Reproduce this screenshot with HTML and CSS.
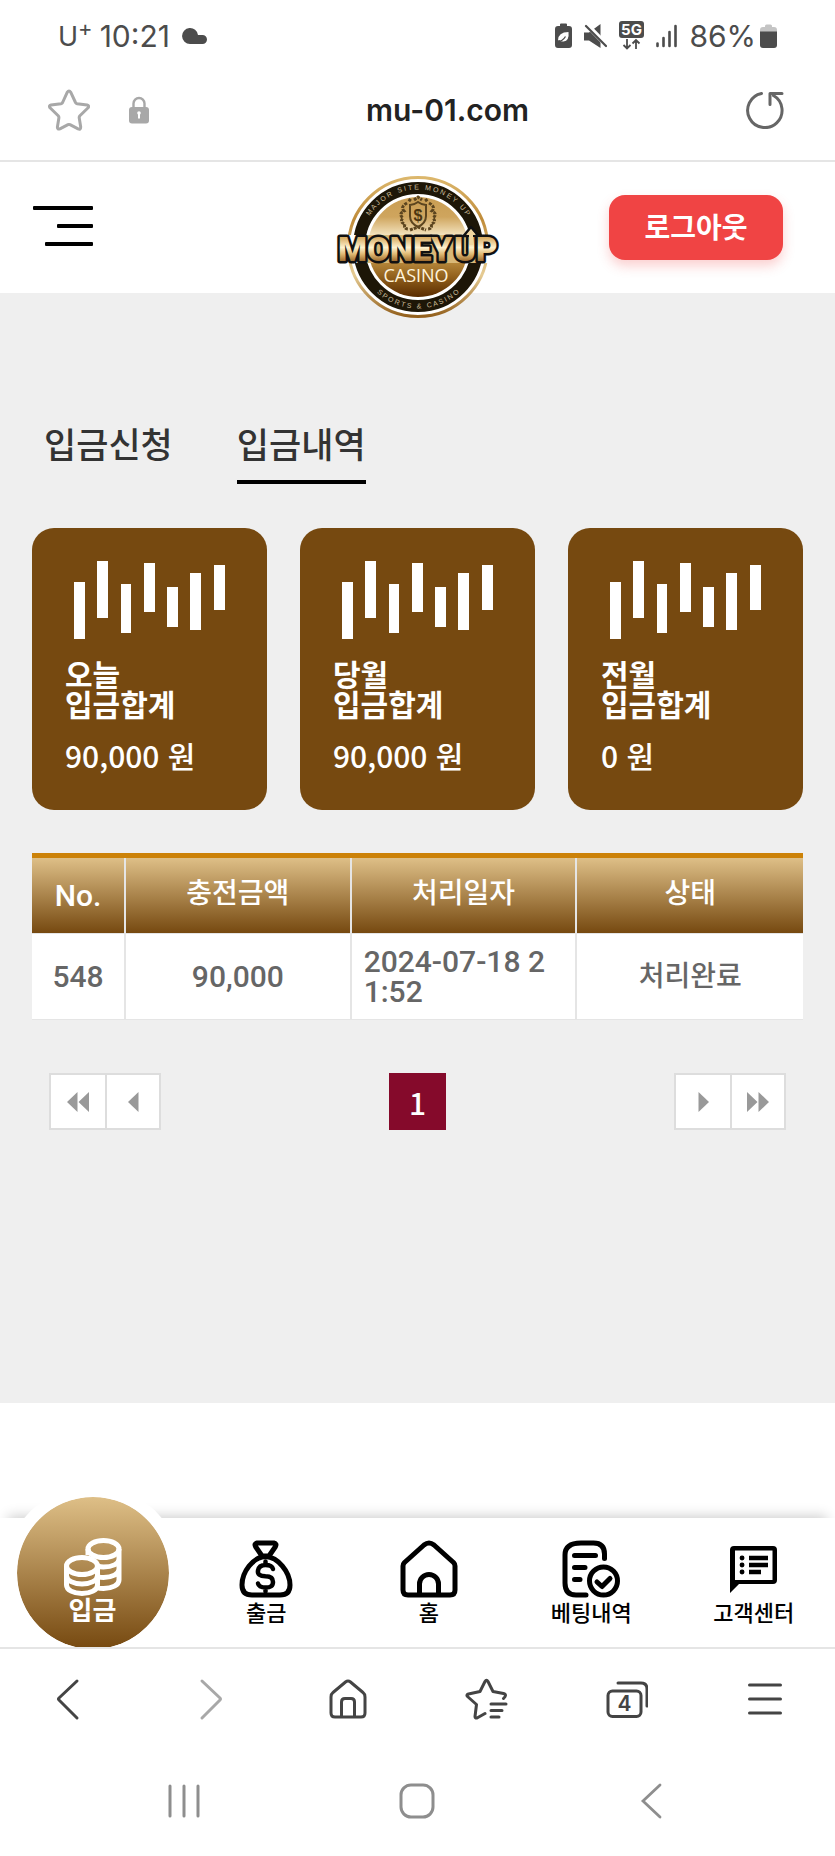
FILE: index.html
```html
<!DOCTYPE html>
<html lang="ko">
  <head>
    <meta charset="UTF-8" />
    <meta name="viewport" content="width=device-width, initial-scale=1.0" />
    <title>입금내역</title>
    <link rel="stylesheet" href="styles.css">
  </head>
  <body>
    <div class="status-bar">
      <span class="carrier">U<sup>+</sup></span>
      <span class="clock">10:21</span>
      <svg class="cloud" width="26" height="18" viewBox="0 0 26 18" fill="#4c4c4c">
        <path d="M8 17a8 8 0 1 1 8-9h4.500a4.500 4.500 0 0 1 0 9z" />
      </svg>
      <div class="status-icons">
        <svg width="17" height="26" viewBox="0 0 17 26">
          <path d="M5 3V1.500Q5 .5 6 .5h5q1 0 1 1V3h2q3 0 3 3v16q0 3-3 3H3q-3 0-3-3V6q0-3 3-3z" fill="#4c4c4c" />
          <path d="M3 17.500Q3 9 13.500 9q1 9-5 9.500-3 .3-4-1.500z" fill="#fff" />
          <path d="M2.500 18.500q5 0 8-5" stroke="#4c4c4c" stroke-width="1.300" fill="none" />
        </svg>
        <svg width="23" height="24" viewBox="0 0 23 24">
          <path d="M0 8.500h5L16.500 0v24L5 16.500H0z" fill="#4c4c4c" />
          <path d="M2 0l21 21.500" stroke="#fff" stroke-width="5" />
          <path d="M2 2l20 20" stroke="#4c4c4c" stroke-width="2.200" stroke-linecap="round" />
        </svg>
        <svg width="25" height="30" viewBox="0 0 25 30">
          <rect width="25" height="17" rx="3" fill="#4c4c4c" />
          <text x="12.500" y="14" text-anchor="middle" class="network">5G</text>
          <path d="M8 18v9M4.500 24L8 27.500l3.500-3.500M17 28v-9M13.500 22.500L17 19l3.500 3.500" stroke="#4c4c4c" stroke-width="1.800" fill="none" />
        </svg>
        <svg width="21" height="24" viewBox="0 0 21 24" stroke="#4c4c4c" stroke-width="2.600" stroke-linecap="round">
          <path d="M1.500 19.500v2.500M7.500 14v8M13.500 8v14M19.500 2v20" />
        </svg>
        <span class="battery-text">86%</span>
        <svg width="17" height="25" viewBox="0 0 17 25">
          <path d="M5 3V2q0-1.500 1.500-1.500h4Q12 .5 12 2v1h2q3 0 3 3v5H0V6q0-3 3-3z" fill="#c4c4c4" />
          <path d="M0 7.500h17V21q0 3-3 3H3q-3 0-3-3z" fill="#4c4c4c" />
        </svg>
      </div>
    </div>

    <div class="address-bar">
      <button class="icon-button" aria-label="즐겨찾기">
        <svg width="42" height="42" viewBox="0 0 42 42" fill="none" stroke="#a8a8a8" stroke-width="3" stroke-linejoin="round">
          <path d="M19.200 3.300q1.800-2.600 3.600 0l4.700 10.200q.5 1 1.600 1.200l10 1.300q2.600.7 1 2.800l-8.200 8q-.8.900-.7 2l1.500 9.200q0 2.900-2.600 1.900l-8.100-4.200q-1-.5-2 0l-8.100 4.200q-2.700.9-2.500-1.900l1.500-9.200q.1-1.100-.7-2l-8.200-8q-1.500-2.100 1-2.800l10-1.300q1.100-.2 1.600-1.200z" />
        </svg>
      </button>
      <svg class="lock" width="20" height="28" viewBox="0 0 20 28">
        <path d="M4.500 12V7.500a5.500 5.500 0 0 1 11 0V12" fill="none" stroke="#a8a8a8" stroke-width="2.400" />
        <rect y="11" width="20" height="16.500" rx="3" fill="#a8a8a8" />
        <path d="M10 16.500v6" stroke="#fff" stroke-width="2" />
        <circle cx="10" cy="17" r="1.800" fill="#fff" />
      </svg>
      <span class="address">mu-01.com</span>
      <button class="icon-button" aria-label="새로고침">
        <svg width="38" height="38" viewBox="0 0 38 38" fill="none" stroke="#666" stroke-width="3" stroke-linecap="round" stroke-linejoin="round">
          <path d="M15.500 2.500A17.200 17.200 0 1 0 27.500 4.500M24 13.500V2.500h12" />
        </svg>
      </button>
    </div>

    <header class="header">
      <button class="menu-button" aria-label="메뉴">
        <span class="line line-1"></span>
        <span class="line line-2"></span>
        <span class="line line-3"></span>
      </button>

      <a href="#" class="logo" aria-label="Money Up Casino">
        <svg width="168" height="144" viewBox="0 0 168 144">
          <defs>
            <linearGradient id="gold" x1="0" y1="0" x2="0" y2="1">
              <stop offset="0" stop-color="#c99d52" />
              <stop offset=".2" stop-color="#cfa55e" />
              <stop offset=".38" stop-color="#f3e3be" />
              <stop offset=".6" stop-color="#c39545" />
              <stop offset=".8" stop-color="#91601c" />
              <stop offset="1" stop-color="#5a2c00" />
            </linearGradient>
            <linearGradient id="ring" x1="0" y1="0" x2="0" y2="1">
              <stop offset="0" stop-color="#dcb76c" />
              <stop offset=".3" stop-color="#c08c3a" />
              <stop offset=".7" stop-color="#e6cc94" />
              <stop offset="1" stop-color="#93601d" />
            </linearGradient>
            <linearGradient id="letters" x1="0" y1="0" x2="0" y2="1">
              <stop offset=".2" stop-color="#d9ae66" />
              <stop offset=".45" stop-color="#fff2cf" />
              <stop offset=".62" stop-color="#dfb872" />
              <stop offset=".85" stop-color="#8a541a" />
            </linearGradient>
            <path id="arc-top" d="M26.500 72A57.500 57.500 0 0 1 141.500 72" />
            <path id="arc-bottom" d="M22.500 72A61.500 61.500 0 0 0 145.500 72" />
          </defs>
          <circle cx="84" cy="72" r="69.500" fill="#fff" stroke="url(#ring)" stroke-width="3" />
          <circle cx="84" cy="72" r="59" fill="none" stroke="#1d1607" stroke-width="12" />
          <circle cx="84" cy="72" r="50" fill="url(#gold)" />
          <text class="logo-arc"><textPath href="#arc-top" startOffset="50%" text-anchor="middle">M A J O R &#160; S I T E &#160; M O N E Y &#160; U P</textPath></text>
          <text class="logo-arc"><textPath href="#arc-bottom" startOffset="50%" text-anchor="middle">S P O R T S &#160; &amp; &#160; C A S I N O</textPath></text>
          <g fill="none" stroke="#5c451f" stroke-width="2">
            <path d="M76 30q4 0 8-3 4 3 8 3v11q0 7-8 11-8-4-8-11z" />
            <path d="M73 28q-7 4-3 8-6 3-1 7-4 4 2 6-2 5 4 5M95 28q7 4 3 8 6 3 1 7 4 4-2 6 2 5-4 5M77 26l-3-2M91 26l3-2M80 25l4-3 4 3M76 55l8-3 8 3" stroke-width="3" stroke-dasharray="3 1" />
          </g>
          <text x="84" y="46" text-anchor="middle" class="logo-dollar">$</text>
          <path d="M12 60h12v28H12zM144 60h12v28h-12z" fill="#fff" />
          <path d="M24 60h120v28H24z" fill="#d9b877" />
          <text x="4" y="86" class="logo-name">MONEY</text>
          <path d="M133.500 76V61h-4l7.500-9 7.500 9h-4v15z" fill="#f0d6a0" stroke="#111" stroke-width="2.500" stroke-linejoin="round" />
          <text x="120" y="86" class="logo-name">UP</text>
          <path d="M135 70V60h-2.500l4.500-5.500 4.500 5.500H139v10z" fill="#f0d6a0" />
          <text x="82" y="107" text-anchor="middle" class="logo-sub">CASINO</text>
        </svg>
      </a>

      <button class="logout">로그아웃</button>
    </header>

    <main class="content">
      <nav class="tabs">
        <a href="#" class="tab">입금신청</a>
        <a href="#" class="tab active" aria-current="page">입금내역</a>
      </nav>

      <section class="cards">
        <article class="card">
          <svg class="bars" height="80" viewBox="0 0 169 80" fill="#fff" preserveAspectRatio="xMinYMin">
            <path d="M9 22h11v57H9zM32 1h11v57H32zM56 24h10v49H56zM79 3h11v49H79zM102 27h11v40h-11zM125 13h11v57h-11zM149 5h11v45h-11z" />
          </svg>
          <h2>오늘<br>입금합계</h2>
          <p>90,000 원</p>
        </article>
        <article class="card">
          <svg class="bars" height="80" viewBox="0 0 169 80" fill="#fff" preserveAspectRatio="xMinYMin">
            <path d="M9 22h11v57H9zM32 1h11v57H32zM56 24h10v49H56zM79 3h11v49H79zM102 27h11v40h-11zM125 13h11v57h-11zM149 5h11v45h-11z" />
          </svg>
          <h2>당월<br>입금합계</h2>
          <p>90,000 원</p>
        </article>
        <article class="card">
          <svg class="bars" height="80" viewBox="0 0 169 80" fill="#fff" preserveAspectRatio="xMinYMin">
            <path d="M9 22h11v57H9zM32 1h11v57H32zM56 24h10v49H56zM79 3h11v49H79zM102 27h11v40h-11zM125 13h11v57h-11zM149 5h11v45h-11z" />
          </svg>
          <h2>전월<br>입금합계</h2>
          <p>0 원</p>
        </article>
      </section>

      <table class="history">
        <thead>
          <tr>
            <th class="col-no">No.</th>
            <th>충전금액</th>
            <th>처리일자</th>
            <th>상태</th>
          </tr>
        </thead>
        <tbody>
          <tr>
            <td>548</td>
            <td>90,000</td>
            <td class="date">2024-07-18 21:52</td>
            <td class="state">처리완료</td>
          </tr>
        </tbody>
      </table>

      <nav class="pagination" aria-label="페이지">
        <div class="page-group">
          <button class="page-arrow" aria-label="처음">
            <svg width="22" height="20" viewBox="0 0 22 20" fill="#999"><path d="M10.500 0v20L0 10zM22 0v20L11.500 10z" /></svg>
          </button>
          <button class="page-arrow" aria-label="이전">
            <svg width="11" height="20" viewBox="0 0 11 20" fill="#999"><path d="M10.500 0v20L0 10z" /></svg>
          </button>
        </div>
        <button class="page-number" aria-current="page">1</button>
        <div class="page-group">
          <button class="page-arrow" aria-label="다음">
            <svg width="11" height="20" viewBox="0 0 11 20" fill="#999"><path d="M.5 0v20L11 10z" /></svg>
          </button>
          <button class="page-arrow" aria-label="마지막">
            <svg width="22" height="20" viewBox="0 0 22 20" fill="#999"><path d="M0 0v20l10.500-10zM11.500 0v20L22 10z" /></svg>
          </button>
        </div>
      </nav>
    </main>

    <nav class="bottom-nav">
      <a href="#" class="nav-item current">
        <span class="circle">
          <svg width="58" height="58" viewBox="0 0 58 58" fill="none" stroke="#fff" stroke-width="5">
            <ellipse cx="39.500" cy="11" rx="15.500" ry="8.500" />
            <path d="M24 11v6M55 11v31c0 5-7 8.500-15.500 8.500-2 0-4 0-6-.8M55 21c0 5-7 8-15.500 8-2 0-4-.3-5.500-1M55 31c0 5-7 8.500-15.500 8.500-1.500 0-3 0-4.500-.5M24 11v4" />
            <ellipse cx="18" cy="28" rx="15.500" ry="8.500" />
            <path d="M2.500 28v19c0 5 7 8.500 15.500 8.500S33.500 52 33.500 47V28M2.500 37.500c0 5 7 8.500 15.500 8.500s15.500-3.500 15.500-8.500" />
          </svg>
          <span>입금</span>
        </span>
      </a>
      <a href="#" class="nav-item">
        <svg width="58" height="58" viewBox="0 0 58 58" fill="none" stroke="#000" stroke-width="5" stroke-linecap="round" stroke-linejoin="round">
          <path d="M20 3h17q3 .5 1.500 3.500L32 16h-7l-6.500-9.500Q17 3.500 20 3zM28.500 16.500C16 17 5 32 5 45q0 10 10 10h28q10 0 10-10C53 32 41 17 28.500 16.500z" />
          <path d="M36 29q-1-4-7.500-4t-7.500 5.500 7.500 5.800q7.500 0 7.500 5.700t-7.500 5.500q-6.500 0-7.500-4M28.500 21.500V25M28.500 47.500v4" stroke-width="4.500" />
        </svg>
        <span>출금</span>
      </a>
      <a href="#" class="nav-item">
        <svg width="58" height="58" viewBox="0 0 58 58" fill="none" stroke="#000" stroke-width="5" stroke-linejoin="round">
          <path d="M3 26q0-2 1.500-3.500L24 5q5-4 10 0l19.500 17.500Q55 24 55 26v24q0 5-5 5H8q-5 0-5-5z" />
          <path d="M19.500 55V44a9.500 9.500 0 0 1 19 0v11" />
        </svg>
        <span>홈</span>
      </a>
      <a href="#" class="nav-item">
        <svg width="58" height="58" viewBox="0 0 58 58" fill="none" stroke="#000" stroke-width="5" stroke-linecap="round" stroke-linejoin="round">
          <path d="M42.500 18.500V14q0-11-11-11H19Q3 3 3 15v28q0 12 11 12h10" />
          <path d="M12.500 15.500h21M12.500 27.500h10.500M12.500 39.500h5.500" />
          <circle cx="41.500" cy="41" r="14" />
          <path d="M35 42l5 4.500 8-8" />
        </svg>
        <span>베팅내역</span>
      </a>
      <a href="#" class="nav-item">
        <svg width="58" height="58" viewBox="0 0 58 58">
          <path d="M5 53V10q0-4 4-4h39q4 0 4 4v30q0 4-4 4H14zM10 10.500V40h37.500V10.500z" fill="#000" fill-rule="evenodd" />
          <path d="M24 18h19M24 25h19M24 32h12" stroke="#000" stroke-width="4.600" />
          <path d="M17 18h.1M17 25h.1M17 32h.1" stroke="#000" stroke-width="4.800" stroke-linecap="round" />
        </svg>
        <span>고객센터</span>
      </a>
    </nav>

    <div class="toolbar">
      <button class="icon-button" aria-label="뒤로">
        <svg width="44" height="44" viewBox="0 0 44 44" fill="none" stroke="#444" stroke-width="3" stroke-linecap="round" stroke-linejoin="round"><path d="M29 4L11 21q-1 1 0 2l18 18" /></svg>
      </button>
      <button class="icon-button" aria-label="앞으로">
        <svg width="44" height="44" viewBox="0 0 44 44" fill="none" stroke="#a8a8a8" stroke-width="3" stroke-linecap="round" stroke-linejoin="round"><path d="M15 4l18 17q1 1 0 2L15 41" /></svg>
      </button>
      <button class="icon-button" aria-label="홈">
        <svg width="44" height="44" viewBox="0 0 44 44" fill="none" stroke="#444" stroke-width="3" stroke-linejoin="round">
          <path d="M5 20q0-3 2-4.500L19.500 5q2.500-2 5 0L37 15.500q2 1.500 2 4.500v16q0 4-4 4H9q-4 0-4-4z" />
          <path d="M15.500 40V25q0-3.500 3.500-3.500h6q3.500 0 3.500 3.500v15" />
        </svg>
      </button>
      <button class="icon-button" aria-label="북마크">
        <svg width="44" height="44" viewBox="0 0 44 44" fill="none" stroke="#444" stroke-width="3" stroke-linecap="round" stroke-linejoin="round">
          <path d="M38.500 21.500q2-2 2-3 0-1.500-2-2L28 14.500l-5-10q-1.500-2.500-3 0l-5 10L3.500 17q-2.500 1-1 2.500l9 8-1.500 12q0 2 2 1.500l8-4.500" />
          <path d="M26 27h15M26 33.500h11M26 40h8" />
        </svg>
      </button>
      <button class="icon-button" aria-label="탭 4개">
        <svg width="44" height="44" viewBox="0 0 44 44" fill="none" stroke="#444" stroke-width="3" stroke-linecap="round">
          <rect x="4" y="14" width="33" height="25.500" rx="4.500" />
          <path d="M14 6h23q6 0 6 6v17" />
          <text x="20.500" y="34" text-anchor="middle" class="tab-count">4</text>
        </svg>
      </button>
      <button class="icon-button" aria-label="더보기">
        <svg width="44" height="44" viewBox="0 0 44 44" stroke="#444" stroke-width="3" stroke-linecap="round"><path d="M6.500 8h31M6.500 22h31M6.500 36h31" /></svg>
      </button>
    </div>

    <div class="system-nav">
      <button class="icon-button" aria-label="최근 앱">
        <svg width="36" height="36" viewBox="0 0 36 36" stroke="#8e8e8e" stroke-width="3" stroke-linecap="round"><path d="M4 3v30M18 3v30M32 3v30" /></svg>
      </button>
      <button class="icon-button" aria-label="홈 화면">
        <svg width="36" height="36" viewBox="0 0 36 36" fill="none" stroke="#8e8e8e" stroke-width="3"><rect x="2" y="2" width="32" height="32" rx="10" /></svg>
      </button>
      <button class="icon-button" aria-label="이전 화면">
        <svg width="36" height="36" viewBox="0 0 36 36" fill="none" stroke="#8e8e8e" stroke-width="2.800" stroke-linecap="round"><path d="M27 2L10 18l17 16" /></svg>
      </button>
    </div>
  </body>
</html>
```

FILE: styles.css
```css
* {
  margin: 0;
  padding: 0;
  box-sizing: border-box;
}

body {
  min-height: 100vh;
  display: flex;
  flex-direction: column;
  background-color: #fff;
  font-family: "Noto Sans CJK KR", sans-serif;
}

button {
  border: none;
  background: none;
  font-family: inherit;
  cursor: pointer;
}

a {
  color: inherit;
  text-decoration: none;
}

svg {
  display: block;
}

.icon-button {
  display: flex;
  align-items: center;
  justify-content: center;
}

/* Barra de estado */
.status-bar {
  height: 62px;
  padding: 10px 58px 0;
  display: flex;
  align-items: center;
  font-family: Inter, sans-serif;
  font-size: 30px;
  color: #4c4c4c;
}

.carrier {
  font-size: 27px;
}

.carrier sup {
  font-size: 22px;
  line-height: 0;
}

.clock {
  margin-left: 7px;
}

.cloud {
  margin-left: 12px;
}

.status-icons {
  margin-left: auto;
  display: flex;
  align-items: center;
  gap: 12px;
}

.battery-text {
  margin-right: -8px;
}

.network {
  font-family: Inter, sans-serif;
  font-size: 15px;
  font-weight: 700;
  fill: #fff;
}

.address-bar {
  height: 100px;
  padding: 0 51px 2px 48px;
  display: flex;
  align-items: center;
  border-bottom: 2px solid #e5e5e5;
}

.lock {
  margin-left: 39px;
}

.address {
  flex: 1;
  text-align: center;
  font-family: Inter, sans-serif;
  font-size: 30px;
  font-weight: 600;
  color: #222;
}

/* Cabecera */
.header {
  position: relative;
  height: 131px;
  padding: 0 52px 0 33px;
  display: flex;
  align-items: center;
  justify-content: space-between;
}

.menu-button {
  width: 60px;
  padding-bottom: 3px;
  display: flex;
  flex-direction: column;
  align-items: flex-end;
  gap: 14px;
}

.line {
  height: 4px;
  border-radius: 1px;
  background-color: #000;
}

.line-1 {
  width: 60px;
}

.line-2 {
  width: 36px;
}

.line-3 {
  width: 48px;
}

/* El logo sobresale por debajo de la cabecera */
.logo {
  position: absolute;
  top: 13px;
  left: 50%;
  transform: translateX(-50%);
}

.logo-arc {
  font-family: "Liberation Sans", sans-serif;
  font-size: 7px;
  fill: #cdbf9c;
}

.logo-dollar {
  font-family: "Liberation Sans", sans-serif;
  font-size: 16px;
  font-weight: 700;
  fill: #4c3510;
}

.logo-name {
  font-family: Roboto, sans-serif;
  font-size: 33px;
  font-weight: 900;
  fill: url(#letters);
  stroke: #111;
  stroke-width: 5px;
  stroke-linejoin: round;
  paint-order: stroke;
}

.logo-sub {
  font-family: "Open Sans", sans-serif;
  font-size: 18px;
  fill: #fff4dc;
}

.logout {
  width: 174px;
  height: 65px;
  padding-bottom: 3px;
  border-radius: 16px;
  background-color: #f04444;
  box-shadow: 0 6px 12px rgba(240, 68, 68, 0.25);
  color: #fff;
  font-size: 28px;
  font-weight: 700;
}

/* Contenido */
.content {
  padding: 127px 32px 273px;
  background-color: #efefef;
}

.tabs {
  display: flex;
  gap: 64px;
  padding-left: 12px;
}

.tab {
  padding-bottom: 14px;
  border-bottom: 4px solid transparent;
  font-size: 35px;
  font-weight: 500;
  line-height: 46px;
  color: #333;
}

.tab.active {
  border-bottom-color: #000;
}

.cards {
  margin-top: 44px;
  display: grid;
  grid-template-columns: repeat(3, 1fr);
  gap: 33px;
}

.card {
  padding: 32px 33px 37px;
  border-radius: 22px;
  background-color: #764910;
  color: #fff;
}

.bars {
  width: 100%;
}

.card h2 {
  margin-top: 18px;
  font-size: 30px;
  font-weight: 700;
  line-height: 30px;
}

.card p {
  margin-top: 20px;
  font-size: 30px;
  font-weight: 500;
  line-height: 35px;
}

.history {
  width: 100%;
  margin-top: 43px;
  border-top: 5px solid #cc8208;
  border-spacing: 0;
  table-layout: fixed;
}

.history th,
.history td {
  padding: 12px;
  border-right: 2px solid #e5e5e5;
  border-bottom: 1px solid #e5e5e5;
  text-align: center;
}

.history th:last-child,
.history td:last-child {
  border-right: none;
}

.history th {
  height: 76px;
  padding-bottom: 15px;
  background-image: linear-gradient(#debf87, #764910);
  font-family: Roboto, "Noto Sans CJK KR", sans-serif;
  font-size: 28px;
  font-weight: 500;
  line-height: 30px;
  color: #fff;
}

.history td {
  height: 86px;
  background-color: #fff;
  font-family: Roboto, "Noto Sans CJK KR", sans-serif;
  font-size: 30px;
  font-weight: 500;
  line-height: 30px;
  color: #666;
}

.history th.col-no {
  width: 94px;
  padding-bottom: 12px;
  font-size: 30px;
}

.history .date {
  padding-right: 20px;
  text-align: left;
  word-break: break-all;
}

.history .state {
  font-size: 28px;
}

.pagination {
  margin-top: 53px;
  padding: 0 17px;
  display: flex;
  align-items: center;
  justify-content: space-between;
}

.page-group {
  display: flex;
  border: 2px solid #ddd;
  background-color: #fff;
}

.page-arrow {
  width: 54px;
  height: 53px;
  display: flex;
  align-items: center;
  justify-content: center;
}

.page-arrow + .page-arrow {
  border-left: 2px solid #ddd;
}

.page-number {
  width: 57px;
  height: 57px;
  background-color: #850a2b;
  color: #fff;
  font-size: 30px;
  font-weight: 500;
}

/* Menú inferior */
.bottom-nav {
  height: 131px;
  margin-top: auto;
  display: grid;
  grid-template-columns: 185px repeat(4, 1fr);
  border-bottom: 2px solid #e5e5e5;
  background-color: #fff;
  box-shadow: 0 -10px 12px -8px rgba(0, 0, 0, 0.2);
}

.nav-item {
  padding-top: 22px;
  display: flex;
  flex-direction: column;
  align-items: center;
  font-size: 22px;
  font-weight: 500;
  line-height: 26px;
  color: #000;
}

.nav-item.current {
  height: 165px;
  margin-top: -36px;
  padding-top: 3px;
  overflow: hidden;
  font-size: 26px;
  font-weight: 700;
  color: #fff;
}

.circle {
  flex: none;
  width: 176px;
  height: 176px;
  padding-top: 41px;
  display: flex;
  flex-direction: column;
  align-items: center;
  border: 12px solid #fff;
  border-radius: 50%;
  background: linear-gradient(#debf87, #764910) padding-box;
}

.toolbar {
  height: 100px;
  display: grid;
  grid-template-columns: repeat(6, 1fr);
}

.tab-count {
  font-family: Inter, sans-serif;
  font-size: 21px;
  font-weight: 600;
  fill: #444;
  stroke: none;
}

.system-nav {
  height: 107px;
  padding: 0 67px 3px;
  display: grid;
  grid-template-columns: repeat(3, 1fr);
}
```
